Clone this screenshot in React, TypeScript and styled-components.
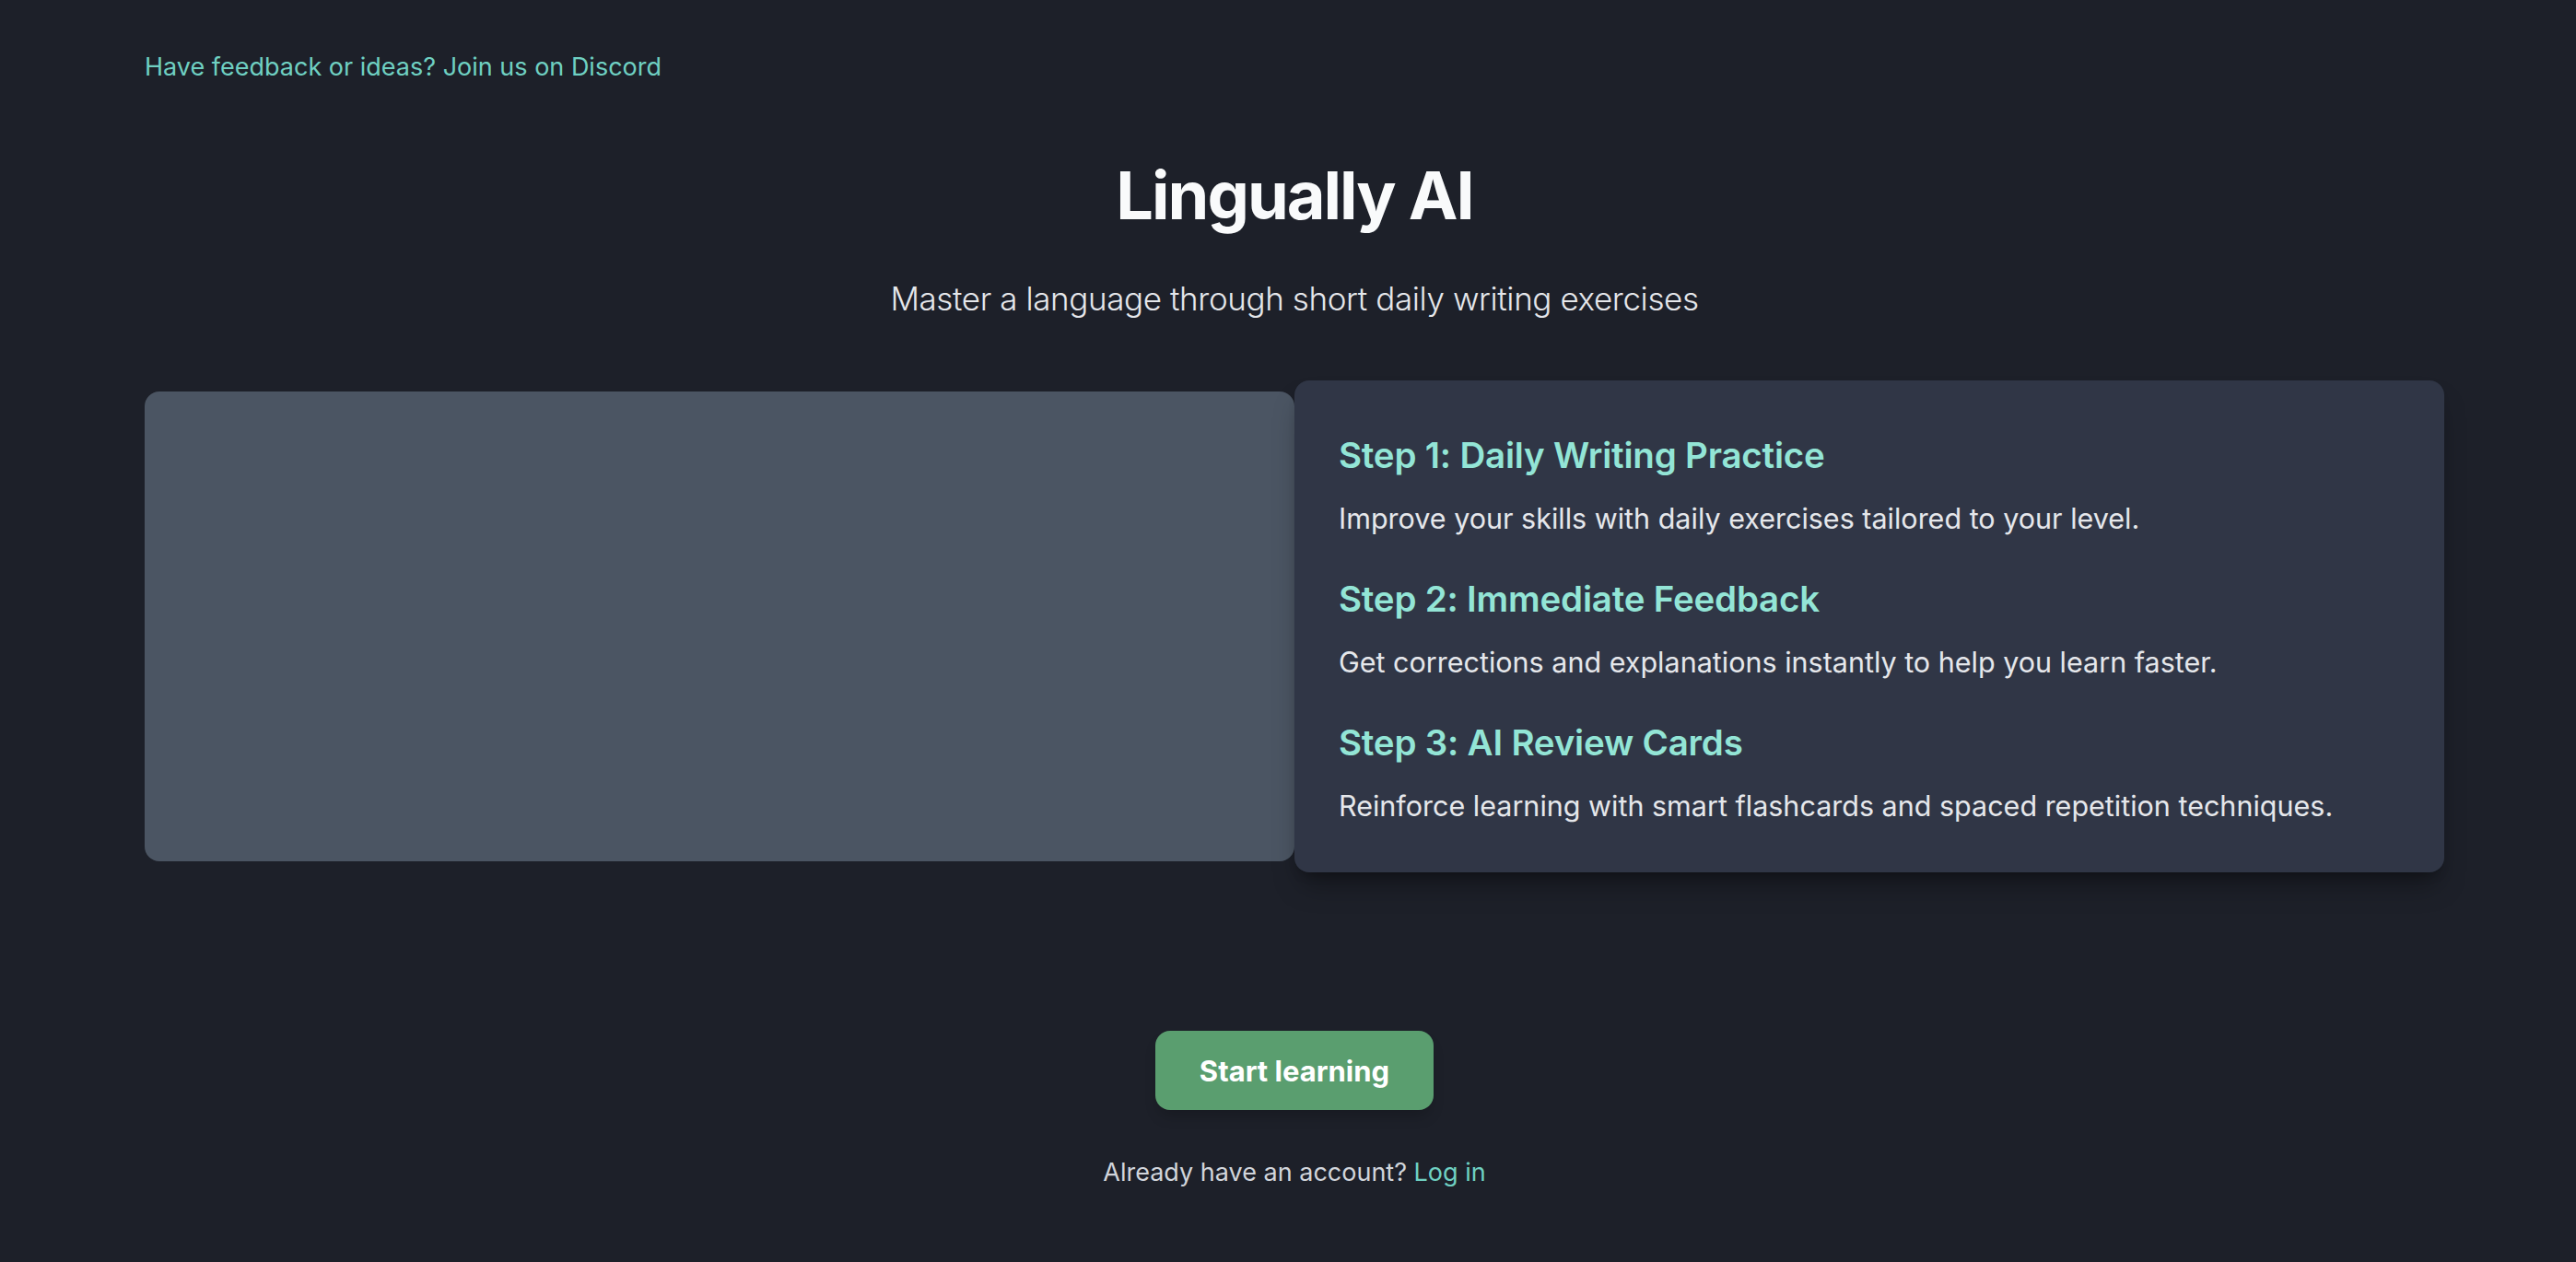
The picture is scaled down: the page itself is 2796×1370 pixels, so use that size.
import React from "react";
import styled, { createGlobalStyle } from "styled-components";

const GlobalStyle = createGlobalStyle`
  html, body {
    margin: 0;
    padding: 0;
    background: #1d2029;
  }
  body {
    font-family: Inter, "Noto Sans", "Liberation Sans", sans-serif;
    color: #e5e7eb;
    -webkit-font-smoothing: antialiased;
  }
  * { box-sizing: border-box; }
`;

const Page = styled.div`
  min-height: 1370px;
  padding: 53px 143px 0 157px;
`;

const TopLink = styled.a`
  display: inline-block;
  font-size: 27px;
  line-height: 40px;
  color: #6fd0c2;
  text-decoration: none;
`;

const Hero = styled.header`
  display: flex;
  flex-direction: column;
  align-items: center;
  text-align: center;
  margin-top: 79px;
`;

const Title = styled.h1`
  margin: 0;
  font-size: 72px;
  line-height: 80px;
  font-weight: 700;
  color: #f9fafb;
  letter-spacing: -2px;
`;

const Subtitle = styled.p`
  margin: 44px 0 0;
  font-size: 35px;
  line-height: 56px;
  font-weight: 300;
  color: #e5e7eb;
  letter-spacing: -0.4px;
`;

const Showcase = styled.section`
  display: flex;
  align-items: center;
  margin-top: 61px;
`;

const MediaPlaceholder = styled.div`
  flex: 0 0 50%;
  height: 510px;
  background: #4b5563;
  border-radius: 16px;
`;

const StepsCard = styled.div`
  flex: 0 0 50%;
  display: flex;
  flex-direction: column;
  gap: 35px;
  padding: 53px 48px 48px;
  background: #303646;
  border-radius: 16px;
  box-shadow: 0 20px 30px -8px rgba(0, 0, 0, 0.35), 0 8px 12px -6px rgba(0, 0, 0, 0.25);
`;

const Step = styled.div`
  display: flex;
  flex-direction: column;
  gap: 17px;
`;

const StepTitle = styled.h3`
  margin: 0;
  font-size: 38.5px;
  line-height: 56px;
  font-weight: 600;
  color: #93e5d6;
  letter-spacing: -0.2px;
`;

const StepText = styled.p`
  margin: 0;
  font-size: 30.5px;
  line-height: 48px;
  font-weight: 400;
  color: #e5e7eb;
`;

const CTA = styled.div`
  display: flex;
  flex-direction: column;
  align-items: center;
  margin-top: 172px;
`;

const StartButton = styled.button`
  height: 86px;
  padding: 0 48px;
  border: none;
  border-radius: 16px;
  background: #5a9e6f;
  color: #ffffff;
  font-family: inherit;
  font-size: 31px;
  font-weight: 700;
  cursor: pointer;
  box-shadow: 0 10px 16px -4px rgba(0, 0, 0, 0.2);
`;

const LoginLine = styled.p`
  margin: 48px 0 0;
  font-size: 27px;
  line-height: 40px;
  color: #d1d5db;
`;

const LoginLink = styled.a`
  color: #6fd0c2;
  text-decoration: none;
`;

const steps = [
  {
    title: "Step 1: Daily Writing Practice",
    text: "Improve your skills with daily exercises tailored to your level.",
  },
  {
    title: "Step 2: Immediate Feedback",
    text: "Get corrections and explanations instantly to help you learn faster.",
  },
  {
    title: "Step 3: AI Review Cards",
    text: "Reinforce learning with smart flashcards and spaced repetition techniques.",
  },
];

export default function App() {
  return (
    <>
      <GlobalStyle />
      <Page>
        <TopLink href="#">Have feedback or ideas? Join us on Discord</TopLink>
        <Hero>
          <Title>Lingually AI</Title>
          <Subtitle>Master a language through short daily writing exercises</Subtitle>
        </Hero>
        <Showcase>
          <MediaPlaceholder />
          <StepsCard>
            {steps.map((s) => (
              <Step key={s.title}>
                <StepTitle>{s.title}</StepTitle>
                <StepText>{s.text}</StepText>
              </Step>
            ))}
          </StepsCard>
        </Showcase>
        <CTA>
          <StartButton>Start learning</StartButton>
          <LoginLine>
            Already have an account? <LoginLink href="#">Log in</LoginLink>
          </LoginLine>
        </CTA>
      </Page>
    </>
  );
}
